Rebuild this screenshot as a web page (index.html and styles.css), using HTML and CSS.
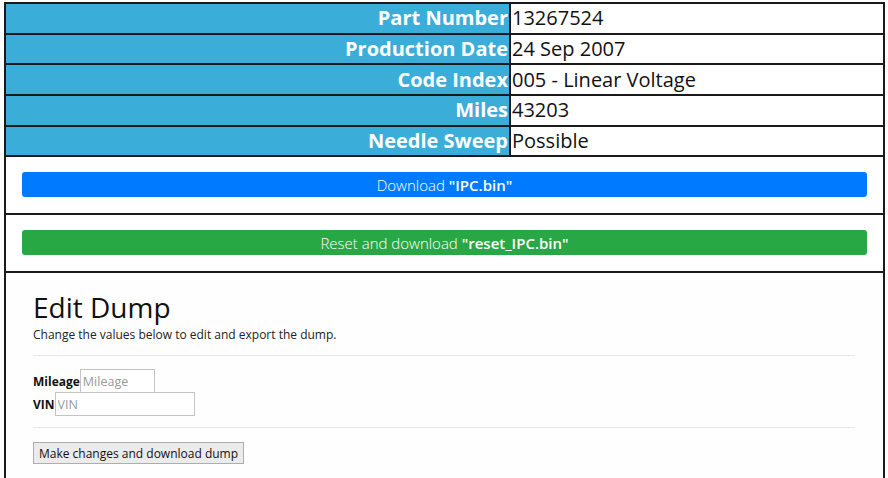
FILE: index.html
```html
<!DOCTYPE html>
<html>
<head>
<meta charset="utf-8">
<link rel="stylesheet" href="styles.css">
</head>
<body>
<table class="info">
  <tr><th>Part Number</th><td>13267524</td></tr>
  <tr><th>Production Date</th><td>24 Sep 2007</td></tr>
  <tr><th>Code Index</th><td>005 - Linear Voltage</td></tr>
  <tr><th>Miles</th><td>43203</td></tr>
  <tr><th>Needle Sweep</th><td>Possible</td></tr>
  <tr><td colspan="2" class="btn-cell"><button class="btn btn-blue">Download <b>"IPC.bin"</b></button></td></tr>
  <tr><td colspan="2" class="btn-cell"><button class="btn btn-green">Reset and download <b>"reset_IPC.bin"</b></button></td></tr>
  <tr><td colspan="2" class="edit-cell">
    <div class="edit">
      <h1>Edit Dump</h1>
      <p class="lead">Change the values below to edit and export the dump.</p>
      <hr class="hr-top">
      <div class="field"><label>Mileage</label><input class="in-mileage" placeholder="Mileage"></div>
      <div class="field"><label>VIN</label><input class="in-vin" placeholder="VIN"></div>
      <hr class="hr-bottom">
      <button class="plain">Make changes and download dump</button>
    </div>
  </td></tr>
</table>
</body>
</html>
```
FILE: styles.css
```css
html, body { margin: 0; padding: 0; background: #fff; }
body { font-family: "Open Sans", "Noto Sans", sans-serif; color: #111; padding: 2px 0 0 4px; }
.info { border-collapse: collapse; width: 881px; }
.info th, .info td { border: 2px solid #1a1a1a; height: 28.7px; padding: 0 0 0 1px; line-height: 28px; }
.info th { background: #3badd9; color: #fff; font-weight: 700; font-size: 20px; text-align: right; width: 502px; padding: 0 1px 0 0; }
.info td { font-size: 20px; color: #111; }
.info td.btn-cell { padding: 15px 16px 16px 16px; height: auto; line-height: normal; }
.btn { display: block; width: 100%; height: 25px; border: 0; border-radius: 3px; color: #fff; font-family: "Open Sans", sans-serif; font-size: 15px; font-weight: 300; padding: 0; }
.btn b { font-weight: 600; }
.btn-blue { background: #007bff; }
.btn-green { background: #28a745; }
.info td.edit-cell { padding: 0 28px 20px 27px; height: auto; line-height: normal; background: #fefefe; }
.edit h1 { font-size: 28px; font-weight: 400; margin: 18px 0 0; color: #111; line-height: 1.2; }
.lead { font-size: 12px; margin: 1px 0 0; line-height: 18px; color: #222; }
hr { border: 0; border-top: 1px solid #e8e8e8; margin: 0; }
.hr-top { margin: 11px 0 13px; }
.hr-bottom { margin: 11px 0 14px; }
.field { display: flex; align-items: center; font-size: 12px; }
.field label { font-weight: 700; }
.field input { height: 24px; box-sizing: border-box; border: 1px solid #c4c4c4; font-family: "Open Sans", sans-serif; font-size: 12.5px; padding: 0 2px; margin: 0; background: #fff; }
.field input::placeholder { color: #999; }
.field + .field { margin-top: -1px; }
.in-mileage { width: 75px; }
.in-vin { width: 140px; }
.plain { display: block; height: 22px; width: 211px; background: #ebebeb; border: 1px solid #adadad; font-family: "Open Sans", sans-serif; font-size: 12px; color: #111; padding: 0; }
```
